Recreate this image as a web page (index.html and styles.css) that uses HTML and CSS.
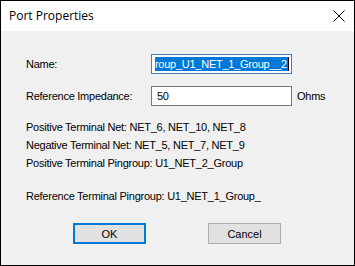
FILE: index.html
```html
<!DOCTYPE html>
<html lang="en">
<head>
  <meta charset="UTF-8">
  <title>Port Properties</title>
  <link rel="stylesheet" href="styles.css">
</head>
<body>

  <div class="window">
    <header class="titlebar">
      <span class="title">Port Properties</span>
      <!-- close glyph -->
      <svg class="close" width="12" height="12" viewBox="0 0 12 12">
        <path d="M0.5 0.5 L11.5 11.5 M11.5 0.5 L0.5 11.5" stroke="#000" stroke-width="1" fill="none"/>
      </svg>
    </header>

    <main class="content">
      <div class="form">
        <label class="label">Name:</label>
        <div class="field field-focus">
          <span class="scroll"><span class="selected">U1_NET_2_Group_U1_NET_1_Group__2</span><span class="caret"></span></span>
        </div>
        <span></span>

        <label class="label">Reference Impedance:</label>
        <div class="field"><span class="value">50</span></div>
        <span class="unit">Ohms</span>
      </div>

      <div class="info">
        <div class="line">Positive Terminal Net: NET_6, NET_10, NET_8</div>
        <div class="line">Negative Terminal Net: NET_5, NET_7, NET_9</div>
        <div class="line">Positive Terminal Pingroup: U1_NET_2_Group</div>
        <div class="line line-gap">Reference Terminal Pingroup: U1_NET_1_Group_</div>
      </div>

      <div class="buttons">
        <button class="btn btn-default">OK</button>
        <button class="btn">Cancel</button>
      </div>
    </main>
  </div>

</body>
</html>
```

FILE: styles.css
```css
body {
  margin: 0;
  padding: 0;
  font-family: 'Liberation Sans', Arial, sans-serif;
  font-size: 11px;
  letter-spacing: -0.25px;
  color: #000;
  background: #f0f0f0;
}

.window {
  width: 355px;
  height: 266px;
  box-sizing: border-box;
  border: 1px solid #000;
  display: flex;
  flex-direction: column;
  overflow: hidden;
}

/* Title bar */
.titlebar {
  height: 30px;
  flex: none;
  background: #fff;
  display: flex;
  align-items: center;
  justify-content: space-between;
  padding: 0 9px 0 8px;
}

.title {
  font-family: 'Open Sans', 'Liberation Sans', sans-serif;
  font-size: 12px;
  letter-spacing: 0;
  margin-top: -1px;
}

.close {
  margin-top: -1px;
}

/* Dialog body */
.content {
  flex: 1;
  background: #f0f0f0;
  padding: 23px 0 0 25px;
}

.form {
  display: grid;
  grid-template-columns: 125px 141px auto;
  grid-auto-rows: 20px;
  row-gap: 12px;
  align-items: center;
}

.label {
  line-height: 14px;
}

.field {
  height: 20px;
  box-sizing: border-box;
  border: 1px solid #7a7a7a;
  background: #fff;
  display: flex;
  align-items: center;
  padding: 0 4px;
  overflow: hidden;
}

.field-focus {
  border-color: #4a7eb5;
  padding: 0 2px 0 3px;
}

.scroll {
  display: flex;
  justify-content: flex-end;
  width: 100%;
  overflow: hidden;
  white-space: nowrap;
}

.selected {
  flex: none;
  background: #0078d7;
  color: #fff;
  line-height: 14px;
  padding-right: 1px;
}

.caret {
  flex: none;
  width: 1px;
  height: 14px;
  background: #000;
}

.value {
  padding-left: 1px;
}

.unit {
  padding-left: 5px;
}

/* Net info */
.info {
  margin-top: 14px;
}

.line {
  line-height: 14px;
  margin-bottom: 4px;
}

.line-gap {
  margin-top: 19px;
}

/* Buttons */
.buttons {
  display: flex;
  gap: 62px;
  margin-top: 20px;
  padding-left: 47px;
}

.btn {
  width: 73px;
  height: 21px;
  box-sizing: border-box;
  background: #e1e1e1;
  border: 1px solid #adadad;
  font-family: 'Liberation Sans', Arial, sans-serif;
  font-size: 11px;
  color: #000;
  padding: 0;
}

.btn-default {
  border: 2px solid #0078d7;
}
```
